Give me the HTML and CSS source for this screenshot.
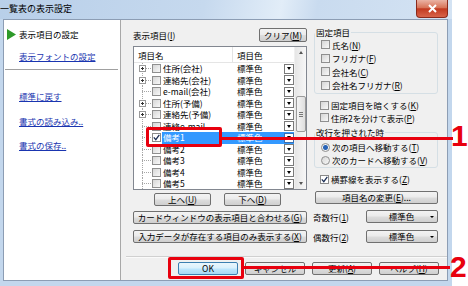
FILE: index.html
```html
<!DOCTYPE html>
<html lang="ja">

<head>
    <meta charset="UTF-8">
    <title>一覧表の表示設定</title>
    <link rel="stylesheet" href="styles.css">
</head>

<body>

    <div class="window">
        <div class="titlebar">
            <span class="title">一覧表の表示設定</span>
            <span class="close">
                <svg width="11" height="9" viewBox="0 0 11 9"><path d="M2 1 L9 8 M9 1 L2 8" stroke="#fff" stroke-width="2" /></svg>
            </span>
        </div>

        <div class="client">
            <nav class="sidebar">
                <div class="current">
                    <svg class="arrow" width="9" height="11" viewBox="0 0 9 11"><polygon points="0,0 9,5.5 0,11" fill="#2e9a2a" /></svg>
                    表示項目の設定
                </div>
                <a class="link font-link" href="#">表示フォントの設定</a>
                <hr>
                <a class="link reset" href="#">標準に戻す</a>
                <a class="link load" href="#">書式の読み込み..</a>
                <a class="link save" href="#">書式の保存..</a>
            </nav>

            <main class="main">
                <div class="panes">
                    <section class="left">
                        <div class="list-head">
                            <span>表示項目(<u>I</u>)</span>
                            <button class="btn clear">クリア(<u>M</u>)</button>
                        </div>

                        <div class="listbox">
                            <div class="grid">
                                <div class="grid-head">
                                    <span class="col-name">項目名</span>
                                    <span class="col-color">項目色</span>
                                </div>
                                <div class="row"><span class="tree"><i class="plus"></i></span><i class="check"></i><span class="name">住所(会社)</span><span class="color">標準色<i class="drop"></i></span></div>
                                <div class="row"><span class="tree"><i class="plus"></i></span><i class="check"></i><span class="name">連絡先(会社)</span><span class="color">標準色<i class="drop"></i></span></div>
                                <div class="row"><span class="tree"></span><i class="check"></i><span class="name">e-mail(会社)</span><span class="color">標準色<i class="drop"></i></span></div>
                                <div class="row"><span class="tree"><i class="plus"></i></span><i class="check"></i><span class="name">住所(予備)</span><span class="color">標準色<i class="drop"></i></span></div>
                                <div class="row"><span class="tree"><i class="plus"></i></span><i class="check"></i><span class="name">連絡先(予備)</span><span class="color">標準色<i class="drop"></i></span></div>
                                <div class="row"><span class="tree"></span><i class="check"></i><span class="name">連絡e-mail</span><span class="color">標準色<i class="drop"></i></span></div>
                                <div class="row sel"><span class="tree"></span><i class="check on"><svg width="7" height="7" viewBox="0 0 7 7"><path d="M0.8 3.4 L2.8 5.6 L6.3 0.8" stroke="#1c2e55" stroke-width="1.3" fill="none" /></svg></i><span class="name">備考1</span><span class="color">標準色<i class="drop"></i></span></div>
                                <div class="row"><span class="tree"></span><i class="check"></i><span class="name">備考2</span><span class="color">標準色<i class="drop"></i></span></div>
                                <div class="row"><span class="tree"></span><i class="check"></i><span class="name">備考3</span><span class="color">標準色<i class="drop"></i></span></div>
                                <div class="row"><span class="tree"></span><i class="check"></i><span class="name">備考4</span><span class="color">標準色<i class="drop"></i></span></div>
                                <div class="row"><span class="tree"></span><i class="check"></i><span class="name">備考5</span><span class="color">標準色<i class="drop"></i></span></div>
                            </div>
                            <div class="scrollbar">
                                <span class="sb-btn"><i class="up"></i></span>
                                <span class="sb-thumb"><i></i><i></i><i></i></span>
                                <span class="sb-btn sb-end"><i class="down"></i></span>
                            </div>
                        </div>

                        <div class="move">
                            <button class="btn">上へ(<u>U</u>)</button>
                            <button class="btn">下へ(<u>D</u>)</button>
                        </div>
                        <button class="btn wide card">カードウィンドウの表示項目と合わせる(<u>G</u>)</button>
                        <button class="btn wide only">入力データが存在する項目のみ表示する(<u>X</u>)</button>
                    </section>

                    <section class="right">
                        <fieldset class="group fixed">
                            <legend>固定項目</legend>
                            <label class="opt"><i class="check"></i>氏名(<u>N</u>)</label>
                            <label class="opt"><i class="check"></i>フリガナ(<u>F</u>)</label>
                            <label class="opt"><i class="check"></i>会社名(<u>C</u>)</label>
                            <label class="opt"><i class="check"></i>会社名フリガナ(<u>R</u>)</label>
                        </fieldset>

                        <div class="opts">
                            <label class="opt"><i class="check"></i>固定項目を暗くする(<u>K</u>)</label>
                            <label class="opt"><i class="check"></i>住所2を分けて表示(<u>P</u>)</label>
                        </div>

                        <fieldset class="group enter">
                            <legend>改行を押された時</legend>
                            <label class="opt"><i class="radio on"></i>次の項目へ移動する(<u>T</u>)</label>
                            <label class="opt"><i class="radio"></i>次のカードへ移動する(<u>V</u>)</label>
                        </fieldset>

                        <label class="opt rule"><i class="check on"><svg width="7" height="7" viewBox="0 0 7 7"><path d="M0.8 3.4 L2.8 5.6 L6.3 0.8" stroke="#1c2e55" stroke-width="1.3" fill="none" /></svg></i>横罫線を表示する(<u>Z</u>)</label>

                        <button class="btn rename">項目名の変更(<u>E</u>)...</button>

                        <div class="pick odd">
                            <span>奇数行(<u>1</u>)</span>
                            <span class="btn combo"><span class="combo-text">標準色</span><i></i></span>
                        </div>
                        <div class="pick even">
                            <span>偶数行(<u>2</u>)</span>
                            <span class="btn combo"><span class="combo-text">標準色</span><i></i></span>
                        </div>
                    </section>
                </div>

                <footer class="footer">
                    <button class="btn ok">OK</button>
                    <button class="btn">キャンセル</button>
                    <button class="btn">更新(<u>A</u>)</button>
                    <button class="btn">ヘルプ(<u>H</u>)</button>
                </footer>
            </main>
        </div>
    </div>

    <!-- annotations -->
    <div class="mark box-1"></div>
    <div class="mark line-1"></div>
    <div class="num num-1">1</div>
    <div class="mark box-2"></div>
    <div class="mark line-2"></div>
    <div class="num num-2">2</div>

</body>

</html>
```

FILE: styles.css
```css
* {
    box-sizing: border-box;
}

body {
    margin: 0;
    width: 468px;
    height: 286px;
    position: relative;
    overflow: hidden;
    background-color: #fff;
    font-family: "Noto Sans CJK JP", "Noto Sans", sans-serif;
    font-size: 8.5px;
    color: #000;
}

u {
    text-decoration: underline;
}

/* window frame */

.window {
    width: 452px;
    height: 286px;
    padding: 0 4px 5px 3px;
    background-color: #c3d7ed;
    display: flex;
    flex-direction: column;
}

.titlebar {
    height: 19px;
    margin: 0 -4px 0 -3px;
    display: flex;
    justify-content: space-between;
    align-items: flex-start;
    background: linear-gradient(100deg, #b8cfe9 0%, #c6d9ee 45%, #e2edf8 62%, #c9dbef 70%, #d4e3f3 100%);
}

.title {
    font-size: 9px;
    line-height: 18px;
}

.close {
    width: 32px;
    height: 18px;
    margin-right: 4px;
    border: 1px solid #8a2a1c;
    border-top: none;
    border-radius: 0 0 4px 4px;
    background: linear-gradient(#eab3a4, #d87458 45%, #c23a20 52%, #d8644a);
    display: flex;
    align-items: center;
    justify-content: center;
}

.client {
    flex: 1;
    display: flex;
    border: 1px solid #8c9db4;
    background-color: #f0f0f0;
}

/* left navigation */

.sidebar {
    width: 117px;
    background-color: #fff;
    border-right: 1px solid #a8a8a8;
    padding: 8px 0 0 3px;
    line-height: 12px;
}

.current {
    display: flex;
    align-items: center;
}

.arrow {
    margin-right: 3px;
}

.link {
    display: block;
    width: max-content;
    margin-left: 12px;
    color: #1a35b0;
    text-decoration: underline;
}

.font-link {
    margin-top: 10px;
}

.sidebar hr {
    margin: 7px 2px 0 -2px;
    border: none;
    border-top: 1px solid #a0a0a0;
    height: 1px;
}

.reset {
    margin-top: 20px;
}

.load {
    margin-top: 13px;
}

.save {
    margin-top: 12px;
}

/* main panel */

.main {
    flex: 1;
    display: flex;
    flex-direction: column;
    padding-top: 7px;
}

.panes {
    display: grid;
    grid-template-columns: 174px 125px;
    column-gap: 6px;
    padding-left: 12px;
    align-items: start;
}

.btn {
    display: block;
    height: 13px;
    padding: 0;
    border: 1px solid #707070;
    border-radius: 2px;
    background: linear-gradient(#f3f3f3, #ebebeb 48%, #dddddd 52%, #cfcfcf);
    font: inherit;
    line-height: 11px;
    color: #000;
    text-align: center;
}

.list-head {
    height: 15px;
    display: flex;
    justify-content: space-between;
    align-items: center;
}

.clear {
    width: 48px;
    height: 14px;
    line-height: 12px;
}

.listbox {
    margin-top: 4px;
    height: 144px;
    border: 1px solid #828790;
    background-color: #fff;
    display: flex;
    overflow: hidden;
}

.grid {
    width: 160px;
}

.grid-head {
    height: 16px;
    display: flex;
    align-items: center;
    border-bottom: 1px solid #e5e5e5;
}

.col-name {
    width: 99px;
    height: 100%;
    padding-left: 4px;
    border-right: 1px solid #e3e3e3;
    display: flex;
    align-items: center;
}

.col-color {
    padding-left: 4px;
}

.row {
    height: 11.5px;
    display: flex;
    align-items: center;
    line-height: 11.5px;
}

.tree {
    width: 18px;
    height: 100%;
    display: flex;
    align-items: center;
    background:
        repeating-linear-gradient(to bottom, #a6a6a6 0 1px, transparent 1px 2px) 8px 0 / 1px 100% no-repeat,
        repeating-linear-gradient(to right, #a6a6a6 0 1px, transparent 1px 2px) 8px 50% / 10px 1px no-repeat;
}

.plus {
    width: 7px;
    height: 7px;
    margin-left: 5px;
    border: 1px solid #9a9a9a;
    background:
        linear-gradient(#333, #333) center / 3px 1px no-repeat,
        linear-gradient(#333, #333) center / 1px 3px no-repeat,
        #fff;
}

.check {
    width: 9px;
    height: 9px;
    flex: none;
    border: 1px solid #8f8f8f;
    background: linear-gradient(135deg, #d6d6d6, #f8f8f8);
    display: inline-flex;
    align-items: center;
    justify-content: center;
}

.check.on {
    background: #fff;
    border-color: #8a8a8a;
}

.row .check {
    margin-right: 1px;
}

.name {
    width: 71px;
    height: 100%;
    padding-left: 1px;
    white-space: nowrap;
    overflow: hidden;
}

.color {
    width: 61px;
    height: 100%;
    padding-left: 4px;
    display: flex;
    align-items: center;
}

.drop {
    width: 10px;
    height: 10px;
    margin-left: auto;
    border: 1px solid #7a7a7a;
    background-color: #fff;
    display: flex;
    align-items: center;
    justify-content: center;
}

.drop::after {
    content: "";
    border-left: 2.5px solid transparent;
    border-right: 2.5px solid transparent;
    border-top: 3px solid #000;
}

.row.sel .name,
.row.sel .color {
    background-color: #3399ff;
    color: #fff;
}

.row.sel .drop {
    border-color: #3a6fb0;
}

.scrollbar {
    width: 12px;
    display: flex;
    flex-direction: column;
    align-items: center;
    background: linear-gradient(90deg, #e6e6e6, #f7f7f7);
    border-left: 1px solid #f0f0f0;
}

.sb-btn {
    height: 11px;
    display: flex;
    align-items: center;
    justify-content: center;
}

.sb-end {
    margin-top: auto;
}

.up {
    border-left: 2.5px solid transparent;
    border-right: 2.5px solid transparent;
    border-bottom: 3px solid #555;
}

.down {
    border-left: 2.5px solid transparent;
    border-right: 2.5px solid transparent;
    border-top: 3px solid #555;
}

.sb-thumb {
    margin-top: 38px;
    width: 10px;
    height: 36px;
    border: 1px solid #9b9b9b;
    border-radius: 2px;
    background: linear-gradient(90deg, #f5f5f5, #dedede);
    display: flex;
    flex-direction: column;
    align-items: center;
    justify-content: center;
    gap: 1px;
}

.sb-thumb i {
    width: 4px;
    height: 1px;
    background-color: #777;
}

.move {
    margin-top: 3px;
    display: flex;
    justify-content: center;
    gap: 13px;
    padding-right: 5px;
}

.move .btn {
    width: 57px;
}

.wide {
    width: 100%;
}

.card {
    margin-top: 5px;
}

.only {
    margin-top: 6px;
}

/* right column */

.group {
    margin: 0 0 0 1px;
    width: 124px;
    border: 1px solid #d5dfe5;
    border-radius: 3px;
    padding: 0 0 1px 6px;
}

.group legend {
    padding: 0 1px;
    margin-left: -6px;
    line-height: 11px;
}

.opt {
    display: flex;
    align-items: center;
    height: 13.5px;
    white-space: nowrap;
}

.opt .check,
.opt .radio {
    margin-right: 2px;
}

.opts {
    margin-top: 5px;
    padding-left: 7px;
}

.opts .opt {
    height: 12.5px;
}

.enter {
    margin-top: 2px;
    padding-top: 2.5px;
    padding-bottom: 0.5px;
}

.enter legend {
    line-height: 12px;
}

.enter .opt {
    height: 13px;
}

.radio {
    width: 9px;
    height: 9px;
    flex: none;
    border: 1px solid #8f8f8f;
    border-radius: 50%;
    background: linear-gradient(135deg, #d6d6d6, #f8f8f8);
}

.radio.on {
    background: radial-gradient(circle, #2a63b5 0 2px, #7ea6d8 2.5px, #f4f4f4 3px);
}

.rule {
    margin-top: 5px;
    padding-left: 7px;
    height: 12px;
}

.rename {
    margin: 6px 0 0 2px;
    width: 123px;
}

.pick {
    display: flex;
    align-items: center;
    justify-content: space-between;
    height: 13px;
}

.odd {
    margin-top: 6px;
}

.even {
    margin-top: 7px;
}

.combo {
    width: 72px;
    display: flex;
    align-items: center;
    padding-left: 6px;
}

.combo-text {
    flex: 1;
    text-align: center;
}

.combo i {
    margin-right: 3px;
    border-left: 2px solid transparent;
    border-right: 2px solid transparent;
    border-top: 2.5px solid #000;
}

/* footer buttons */

.footer {
    margin: auto 0 0 5px;
    border-top: 1px solid #d0d0d0;
    box-shadow: inset 0 1px 0 #fafafa;
    padding: 5px 8px 5px 0;
    display: flex;
    justify-content: flex-end;
    gap: 7px;
}

.footer .btn {
    width: 60px;
}

.footer .ok {
    border-color: #3c7fb1;
    background: linear-gradient(#eaf6fd, #d9f0fc 48%, #bee6fd 52%, #a7d9f5);
}

/* red annotations drawn over the dialog */

.mark {
    position: absolute;
    background-color: #e8000e;
}

.box-1,
.box-2 {
    background: none;
    border: 3px solid #e8000e;
    border-radius: 2px;
}

.box-1 {
    left: 146px;
    top: 127px;
    width: 76px;
    height: 20px;
}

.line-1 {
    left: 222px;
    top: 137px;
    width: 231px;
    height: 3px;
}

.box-2 {
    left: 168px;
    top: 257px;
    width: 76px;
    height: 22px;
}

.line-2 {
    left: 244px;
    top: 266px;
    width: 206px;
    height: 3px;
}

.num {
    position: absolute;
    font-family: "Liberation Sans", sans-serif;
    font-weight: bold;
    font-size: 30px;
    line-height: 30px;
    color: #e8000e;
}

.num-1 {
    left: 451px;
    top: 121px;
}

.num-2 {
    left: 450px;
    top: 252px;
}
```
